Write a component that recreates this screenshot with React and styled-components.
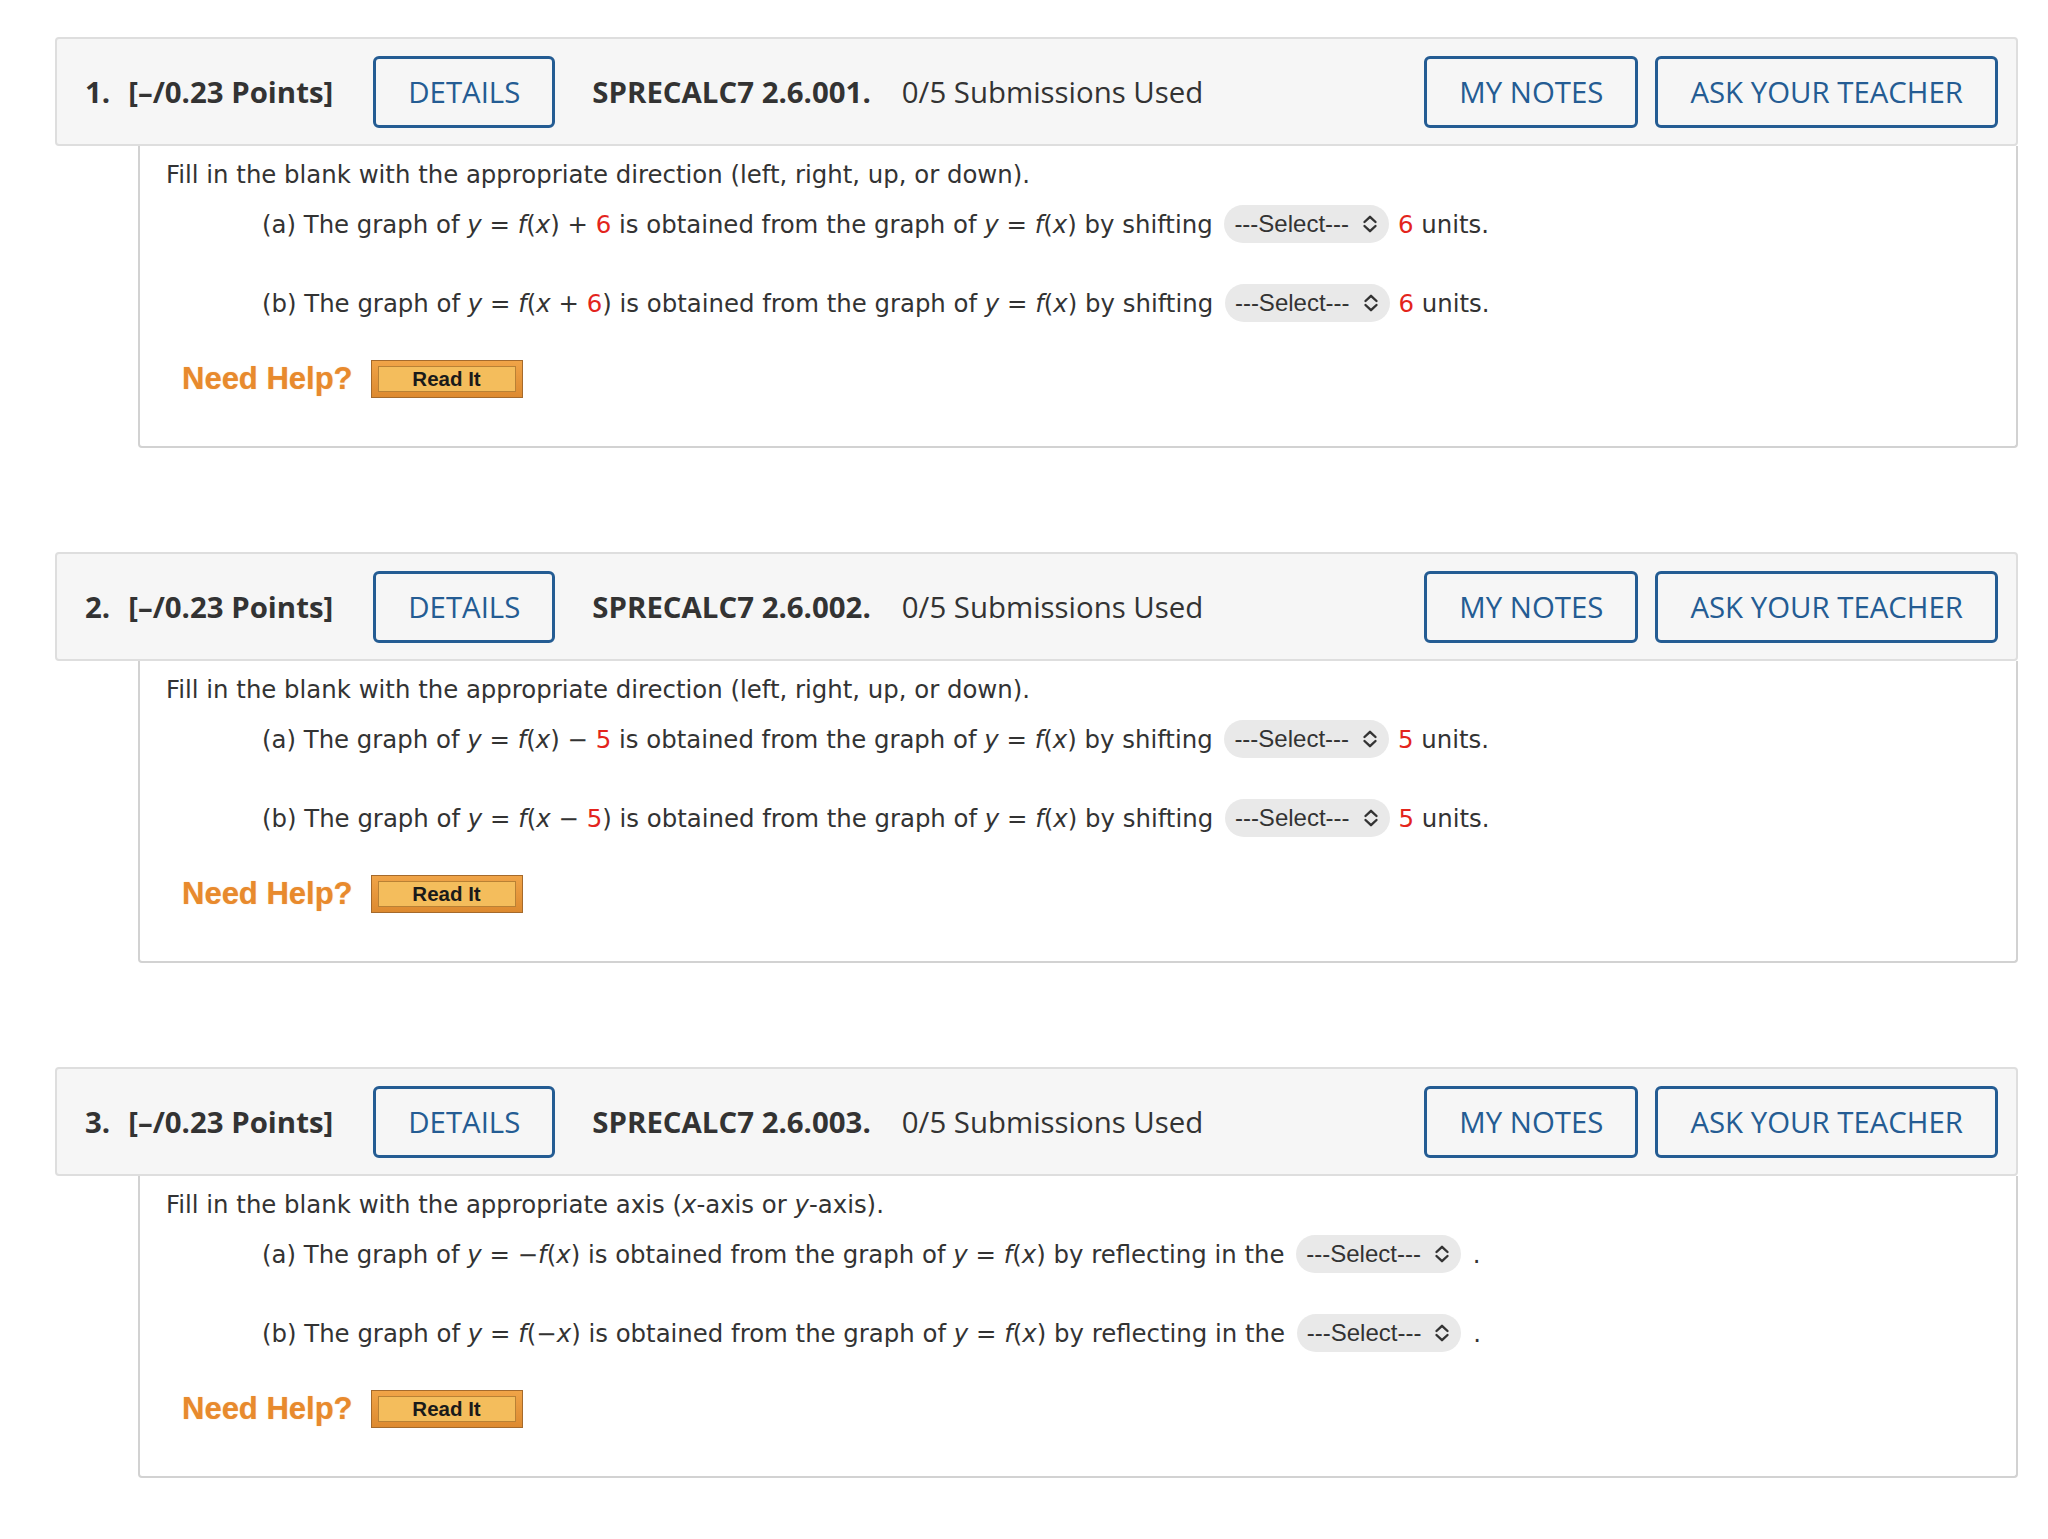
import React from 'react';
import styled, { createGlobalStyle } from 'styled-components';

const colors = {
  text: '#333333',
  blue: '#245c93',
  headerBg: '#f6f6f6',
  headerBorder: '#dedede',
  bodyBorder: '#d2d2d2',
  red: '#e3241c',
  orange: '#e88a2d',
  selectBg: '#e9e9e9'
};

const GlobalStyle = createGlobalStyle`
  html, body {
    margin: 0;
    padding: 0;
    background: #ffffff;
  }
`;

// Page wrapper
const Page = styled.div`
  display: flex;
  flex-direction: column;
  gap: 104px;
  padding: 37px 30px 60px 55px;
  width: 1963px;
  color: ${colors.text};
`;

const Question = styled.section`
  display: flex;
  flex-direction: column;
`;

// Grey question header bar
const Header = styled.div`
  display: flex;
  align-items: center;
  height: 105px;
  padding: 0 18px 0 28px;
  background-color: ${colors.headerBg};
  border: 2px solid ${colors.headerBorder};
  border-radius: 4px;
  font-family: 'Open Sans', 'Liberation Sans', sans-serif;
  font-size: 29.4px;
  color: ${colors.text};
`;

const Num = styled.span`
  font-weight: 700;
`;

const Points = styled.span`
  font-weight: 700;
  margin-left: 18px;
`;

const Code = styled.span`
  font-weight: 700;
  margin-left: 37px;
`;

const Submissions = styled.span`
  margin-left: 31px;
  margin-right: auto;
`;

const OutlineButton = styled.button`
  height: 72px;
  padding: 0 32px;
  margin-left: ${props => props.$gap || 0}px;
  background: transparent;
  border: 3px solid ${colors.blue};
  border-radius: 6px;
  color: ${colors.blue};
  font-family: 'Open Sans', 'Liberation Sans', sans-serif;
  font-size: 29.4px;
  font-weight: 400;
  cursor: pointer;
`;

// White body under the header
const Body = styled.div`
  margin-left: 83px;
  padding: 12px 28px 48px 26px;
  border: 2px solid ${colors.bodyBorder};
  border-top: none;
  border-radius: 0 0 4px 4px;
  font-family: 'DejaVu Sans', Verdana, sans-serif;
  font-size: 24.4px;
  color: ${colors.text};
`;

const Intro = styled.div`
  line-height: 34px;
`;

const Part = styled.div`
  display: flex;
  align-items: center;
  height: 40px;
  margin-top: ${props => props.$first ? 12 : 39}px;
  padding-left: 96px;
  white-space: pre;
`;

const I = styled.i`
  font-style: italic;
`;

const Red = styled.span`
  color: ${colors.red};
`;

const SelectBox = styled.span`
  display: inline-flex;
  align-items: center;
  gap: 13px;
  height: 38px;
  margin: 0 ${props => props.$after || 4}px 0 4px;
  padding: 0 11px 0 10px;
  background-color: ${colors.selectBg};
  border-radius: 19px;
  font-family: 'Liberation Sans', Arial, sans-serif;
  font-size: 24px;
  color: #333;
`;

const HelpRow = styled.div`
  display: flex;
  align-items: center;
  gap: 18px;
  margin-top: 37px;
  padding-left: 16px;
`;

const NeedHelp = styled.span`
  font-family: 'Liberation Sans', Arial, sans-serif;
  font-size: 31px;
  font-weight: 700;
  color: ${colors.orange};
  text-shadow: 0 0 1px rgba(232, 138, 45, 0.6);
`;

const ReadIt = styled.span`
  display: flex;
  width: 152px;
  height: 38px;
  box-sizing: border-box;
  padding: 5px 6px;
  background: linear-gradient(#f0a448, #dd8a30);
  border: 1px solid #a56a2c;
`;

const ReadItInner = styled.span`
  flex: 1;
  display: flex;
  align-items: center;
  justify-content: center;
  background-color: #f4bd5c;
  border: 1px solid #b98135;
  font-family: 'Liberation Sans', Arial, sans-serif;
  font-size: 20.5px;
  font-weight: 700;
  color: #1a1a1a;
`;

function Select({ after }) {
  return (
    <SelectBox $after={after}>
      ---Select---
      <svg width="16" height="18" viewBox="0 0 16 18" fill="none" stroke="#333" strokeWidth="2.4" strokeLinecap="round" strokeLinejoin="round">
        <polyline points="2.5,7 8,1.8 13.5,7" />
        <polyline points="2.5,11 8,16.2 13.5,11" />
      </svg>
    </SelectBox>
  );
}

const fx = <><I>f</I>(<I>x</I>)</>;

const questions = [
  {
    num: 1,
    code: 'SPRECALC7 2.6.001.',
    intro: 'Fill in the blank with the appropriate direction (left, right, up, or down).',
    parts: [
      <>(a) The graph of <I>y</I> = {fx} + <Red>6</Red> is obtained from the graph of <I>y</I> = {fx} by shifting <Select after={9} /> <Red>6</Red> units.</>,
      <>(b) The graph of <I>y</I> = <I>f</I>(<I>x</I> + <Red>6</Red>) is obtained from the graph of <I>y</I> = {fx} by shifting <Select after={9} /> <Red>6</Red> units.</>
    ]
  },
  {
    num: 2,
    code: 'SPRECALC7 2.6.002.',
    intro: 'Fill in the blank with the appropriate direction (left, right, up, or down).',
    parts: [
      <>(a) The graph of <I>y</I> = {fx} − <Red>5</Red> is obtained from the graph of <I>y</I> = {fx} by shifting <Select after={9} /> <Red>5</Red> units.</>,
      <>(b) The graph of <I>y</I> = <I>f</I>(<I>x</I> − <Red>5</Red>) is obtained from the graph of <I>y</I> = {fx} by shifting <Select after={9} /> <Red>5</Red> units.</>
    ]
  },
  {
    num: 3,
    code: 'SPRECALC7 2.6.003.',
    intro: <>Fill in the blank with the appropriate axis (<I>x</I>-axis or <I>y</I>-axis).</>,
    parts: [
      <>(a) The graph of <I>y</I> = −{fx} is obtained from the graph of <I>y</I> = {fx} by reflecting in the <Select /> .</>,
      <>(b) The graph of <I>y</I> = <I>f</I>(−<I>x</I>) is obtained from the graph of <I>y</I> = {fx} by reflecting in the <Select /> .</>
    ]
  }
];

export default function App() {
  return (
    <>
      <GlobalStyle />
      <Page>
        {questions.map(q => (
          <Question key={q.num}>
            <Header>
              <Num>{q.num}.</Num>
              <Points>[–/0.23 Points]</Points>
              <OutlineButton $gap={40}>DETAILS</OutlineButton>
              <Code>{q.code}</Code>
              <Submissions>0/5 Submissions Used</Submissions>
              <OutlineButton>MY NOTES</OutlineButton>
              <OutlineButton $gap={17}>ASK YOUR TEACHER</OutlineButton>
            </Header>
            <Body>
              <Intro>{q.intro}</Intro>
              {q.parts.map((p, i) => (
                <Part key={i} $first={i === 0}>{p}</Part>
              ))}
              <HelpRow>
                <NeedHelp>Need Help?</NeedHelp>
                <ReadIt><ReadItInner>Read It</ReadItInner></ReadIt>
              </HelpRow>
            </Body>
          </Question>
        ))}
      </Page>
    </>
  );
}
